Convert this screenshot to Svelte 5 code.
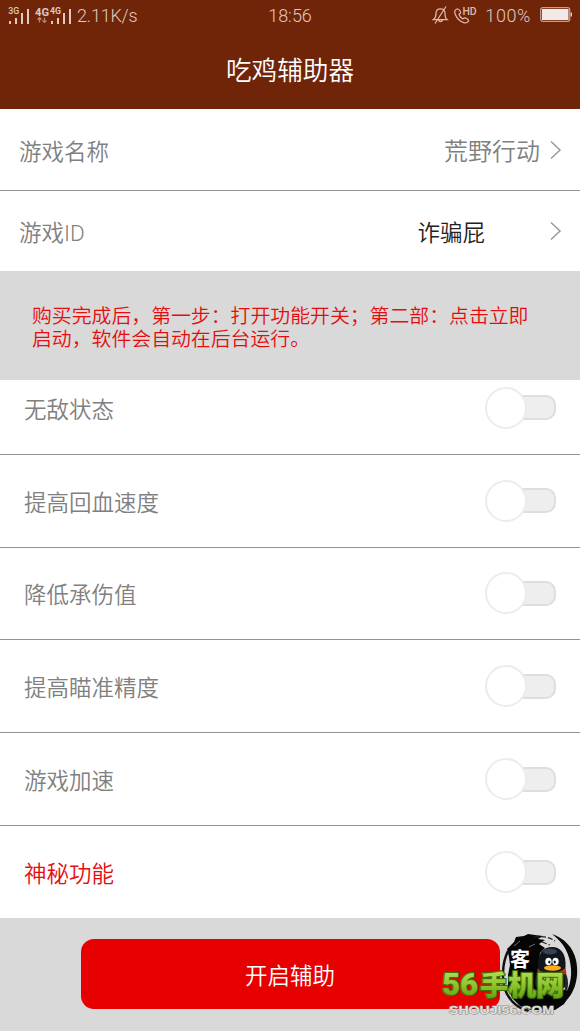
<script lang="ts">
	type Feature = { label: string; enabled: boolean; special?: boolean };

	let gameName = '荒野行动';
	let gameId = '诈骗屁';

	let features: Feature[] = [
		{ label: '无敌状态', enabled: false },
		{ label: '提高回血速度', enabled: false },
		{ label: '降低承伤值', enabled: false },
		{ label: '提高瞄准精度', enabled: false },
		{ label: '游戏加速', enabled: false },
		{ label: '神秘功能', enabled: false, special: true }
	];

	function toggle(feature: Feature) {
		feature.enabled = !feature.enabled;
		features = features;
	}
</script>

<div class="screen">
	<header>
		<div class="status-bar">
			<div class="status-left">
				<svg class="signal" width="66" height="20" viewBox="0 0 66 20">
					<g fill="#dfc9c1">
						<text x="0.3" y="7" font-size="8.5" font-weight="500" textLength="11" lengthAdjust="spacingAndGlyphs">3G</text>
						<rect x="1" y="14" width="2" height="3" />
						<rect x="7" y="11" width="2" height="6" />
						<rect x="13" y="6" width="2" height="11" />
						<rect x="19" y="2" width="2" height="15" />
						<text x="27" y="8.5" font-size="10" font-weight="700" textLength="14" lengthAdjust="spacingAndGlyphs">4G</text>
						<text x="42" y="7" font-size="8.5" font-weight="700" textLength="11" lengthAdjust="spacingAndGlyphs">4G</text>
						<rect x="43" y="14" width="2" height="3" />
						<rect x="49" y="11" width="2" height="6" />
						<rect x="55" y="6" width="2" height="11" />
						<rect x="61" y="2" width="2" height="15" />
					</g>
					<path d="M31.500 15.500v-5m-2 2 2-2 2 2M36.500 10.500v5m-2-2 2 2 2-2" fill="none" stroke="#b48778" stroke-width="1.2" />
				</svg>
				<span class="speed">2.11K/s</span>
			</div>
			<span class="clock">18:56</span>
			<div class="status-right">
				<svg width="46" height="20" viewBox="0 0 46 20" fill="none" stroke="#dfb9aa" stroke-width="1.25">
					<path d="M1.5 14.5h13.5c-2-1.5-2-3-2-6 0-3-1.7-4.700-4.500-4.700S4 5.500 4 8.500c0 3-.5 4.500-2.500 6zM6.500 15c.5 2 3.500 2 4 0M14 1.500 3 18.500" />
					<path d="M25 4c-2.500 1-2.800 3-1.700 5.500 1.700 4 4.700 7 8.500 8.200 2.200.6 4.500-.5 4.800-2 .1-.8-3-3.300-4.200-2.800l-1.500 1c-1.500-.5-3.500-3-3.800-4.600l1.500-1.300c.7-1-2.300-4.500-3.600-4z" />
					<text x="30.500" y="10" font-size="10.500" font-weight="500" textLength="14" fill="#dfb9aa" stroke="none">HD</text>
				</svg>
				<span class="percent">100%</span>
				<svg class="battery" width="33" height="16" viewBox="0 0 33 16">
					<rect x="0.700" y="0.700" width="29" height="13.600" rx="2" fill="none" stroke="#c69d90" stroke-width="1.300" />
					<rect x="2" y="2" width="26.500" height="11" rx="0.500" fill="#f3eae7" />
					<rect x="30.500" y="5.500" width="1.500" height="4" fill="#dfc9c1" />
				</svg>
			</div>
		</div>
		<h1>吃鸡辅助器</h1>
	</header>

	<section class="settings">
		<button class="setting" type="button">
			<span>游戏名称</span>
			<span class="setting-value">{gameName}</span>
			<svg class="chevron" width="12" height="20" viewBox="0 0 12 20"><path d="M1 1.500 10 10l-9 8.500" /></svg>
		</button>
		<button class="setting" type="button">
			<span>游戏ID</span>
			<span class="setting-value dark">{gameId}</span>
			<svg class="chevron" width="12" height="20" viewBox="0 0 12 20"><path d="M1 1.500 10 10l-9 8.500" /></svg>
		</button>
	</section>

	<p class="notice">购买完成后，第一步：打开功能开关；第二部：点击立即<br />启动，软件会自动在后台运行。</p>

	<section class="features">
		{#each features as feature}
			<div class="feature" class:special={feature.special}>
				<span>{feature.label}</span>
				<button
					class="switch"
					class:on={feature.enabled}
					type="button"
					role="switch"
					aria-checked={feature.enabled}
					aria-label={feature.label}
					on:click={() => toggle(feature)}
				>
					<span class="track"></span>
					<span class="knob"></span>
				</button>
			</div>
		{/each}
	</section>

	<footer>
		<button class="start" type="button">开启辅助</button>
	</footer>

	<svg class="watermark" width="150" height="111" viewBox="0 0 150 111">
		<defs>
			<linearGradient id="lime" gradientUnits="userSpaceOnUse" x1="0" y1="51" x2="0" y2="77">
				<stop offset="0" stop-color="#b4dc55" />
				<stop offset="0.5" stop-color="#90c733" />
				<stop offset="1" stop-color="#68a512" />
			</linearGradient>
		</defs>
		<!-- ink circle -->
		<path d="M77 29l7-7 2-5 8-1 4-2 7 1 8 1-5 3 7 1-6 4 6 4-5 5-2 14 2 12 8 10 8 4 10-4 3 7-5 8-9 6-12 0-12 0-11-4-8-8-4-11 0-12 2-10-1-8z" fill="#050505" />
		<path d="M122 14c12 4 21 13 24 26 4 19-2 37-17 47-7 4-14 6-23 5 8-2 15-4 21-9 10-8 15-20 14-34-1-15-7-26-19-35z" fill="#080808" />
		<path d="M78 31c-6 12-7 31-1 43 5 9 12 15 22 17" fill="none" stroke="#111" stroke-width="2.500" />
		<path d="M104 17c9-1 15 0 21 4M112 22l8 3" fill="none" stroke="#222" stroke-width="1.200" stroke-dasharray="5 2" />
		<path d="M84 26l6-5M99 27l6-3" stroke="#a0a0a0" stroke-width="0.700" />
		<text class="seal" x="80" y="47" font-size="20" fill="#fff">客</text>
		<!-- penguin -->
		<path d="M109 50c-3 5-5 11-3 17l5-4zM134 50c4 6 5 13 3 21l-6-8z" fill="#22252c" />
		<ellipse cx="122" cy="61" rx="13" ry="16" fill="#111319" />
		<ellipse cx="122" cy="63" rx="9" ry="12" fill="#f4f4ef" />
		<path d="M108 47c-1-13 5-20 14-20s14.500 7 13.500 20c0 6-6 9-14 9s-13.500-3-13.500-9z" fill="#11151c" />
		<ellipse cx="120" cy="31.500" rx="7" ry="3" fill="#344454" />
		<path d="M107.500 49c8 6 20 6 28-1l1 5c-9 6-21 6-29 0z" fill="#d9241c" />
		<ellipse cx="118.500" cy="41.500" rx="3.200" ry="3.800" fill="#fff" />
		<ellipse cx="125.500" cy="41.500" rx="3.200" ry="3.800" fill="#fff" />
		<ellipse cx="119.300" cy="42" rx="1.100" ry="1.500" fill="#111" />
		<ellipse cx="124.700" cy="42" rx="1.100" ry="1.500" fill="#111" />
		<ellipse cx="122.500" cy="48" rx="8.500" ry="2.700" fill="#ffae18" />
		<g class="brand" fill="url(#lime)" stroke="#3f6e0a" stroke-width="2.400">
			<text class="brand-number" x="12" y="75" font-size="31" textLength="36" lengthAdjust="spacingAndGlyphs">56</text>
			<text class="brand-name" x="50" y="74.500" font-size="27.500" textLength="84" lengthAdjust="spacingAndGlyphs">手机网</text>
		</g>
		<text class="domain" x="19" y="94" font-size="10.500" textLength="105" lengthAdjust="spacingAndGlyphs">SHOUJI56.COM</text>
	</svg>
</div>

<style>
	:global(body) {
		margin: 0;
	}

	.screen {
		position: relative;
		display: flex;
		flex-direction: column;
		width: 580px;
		height: 1031px;
		overflow: hidden;
		background: #d9d9d9;
		color: #808080;
		font-family: Roboto, 'Noto Sans CJK SC', sans-serif;
		font-size: 22.5px;
		font-weight: 350;
	}

	button {
		padding: 0;
		border: 0;
		background: none;
		color: inherit;
		font: inherit;
	}

	header {
		height: 109px;
		background: #702509;
		flex: none;
	}

	.status-bar {
		display: grid;
		grid-template-columns: 1fr auto 1fr;
		align-items: center;
		height: 30px;
		padding: 0 8px;
		color: #dfc9c1;
		font-size: 18px;
	}

	.status-left,
	.status-right {
		display: flex;
		align-items: center;
	}

	.status-left {
		gap: 3px;
	}

	.status-right {
		justify-content: flex-end;
	}

	.signal {
		margin-top: 3px;
		overflow: visible;
	}

	.speed {
		letter-spacing: -0.2px;
	}

	.percent {
		margin: 0 9px 0 7px;
		letter-spacing: 0.6px;
	}

	.battery {
		margin-right: -1px;
	}

	h1 {
		margin: 0;
		color: #fff;
		font-size: 25.6px;
		font-weight: 350;
		line-height: 82px;
		text-align: center;
	}

	.settings {
		flex: none;
		background: #fff;
	}

	.setting {
		display: flex;
		align-items: center;
		box-sizing: border-box;
		width: 100%;
		height: 80px;
		padding: 0 18px 1px 19px;
		text-align: left;
	}

	.setting:first-child {
		height: 82px;
		padding-bottom: 0;
		border-bottom: 1px solid #949494;
	}

	.setting-value {
		margin-left: auto;
		font-size: 24px;
	}

	.setting-value.dark {
		margin-right: 55px;
		color: #222;
		font-size: 22.5px;
	}

	.chevron {
		margin: 1px 0 0 10px;
		fill: none;
		stroke: #999;
		stroke-width: 1.5;
	}

	.notice {
		flex: none;
		box-sizing: border-box;
		height: 109px;
		margin: 0;
		padding: 33.5px 0 0 32px;
		color: #e50d0d;
		font-size: 19.86px;
		line-height: 23.4px;
		white-space: nowrap;
	}

	.features {
		flex: none;
		height: 538px;
		overflow: hidden;
		background: #fff;
	}

	.feature {
		display: flex;
		align-items: center;
		justify-content: space-between;
		box-sizing: border-box;
		height: 92.8px;
		padding: 0 24px;
		border-bottom: 1px solid #949494;
	}

	.feature:first-child {
		margin-top: -18px;
	}

	.feature:last-child {
		border-bottom: 0;
	}

	.feature.special {
		color: #e50d0d;
	}

	.switch {
		display: flex;
		align-items: center;
		width: 71px;
		height: 42px;
	}

	.track {
		order: 2;
		box-sizing: border-box;
		width: 47px;
		height: 25px;
		margin-left: -18px;
		border: 2px solid #dedede;
		border-radius: 10px;
		background: #eee;
	}

	.knob {
		z-index: 1;
		box-sizing: border-box;
		flex: none;
		width: 42px;
		height: 42px;
		border: 2px solid #ececec;
		border-radius: 50%;
		background: #fff;
	}

	.switch.on .track {
		order: 0;
		margin: 0 -18px 0 0;
		background: #e60000;
	}

	footer {
		display: flex;
		justify-content: center;
		padding-top: 21px;
	}

	.start {
		width: 419px;
		height: 70px;
		border-radius: 13px;
		background: #e60000;
		color: #fff;
	}

	.watermark {
		position: absolute;
		right: 0;
		bottom: 0;
		pointer-events: none;
	}

	.seal {
		font-family: 'Noto Sans CJK SC', sans-serif;
		font-weight: 700;
	}

	.brand {
		paint-order: stroke;
		stroke-linejoin: round;
		font-weight: 900;
	}

	.brand-number {
		font-family: Roboto, sans-serif;
	}

	.brand-name {
		font-family: 'Noto Sans CJK SC', sans-serif;
	}

	.domain {
		fill: #e0e0dc;
		stroke: #8a8a8a;
		stroke-width: 1px;
		paint-order: stroke;
		font-family: 'Liberation Sans', sans-serif;
		font-weight: 700;
	}
</style>
